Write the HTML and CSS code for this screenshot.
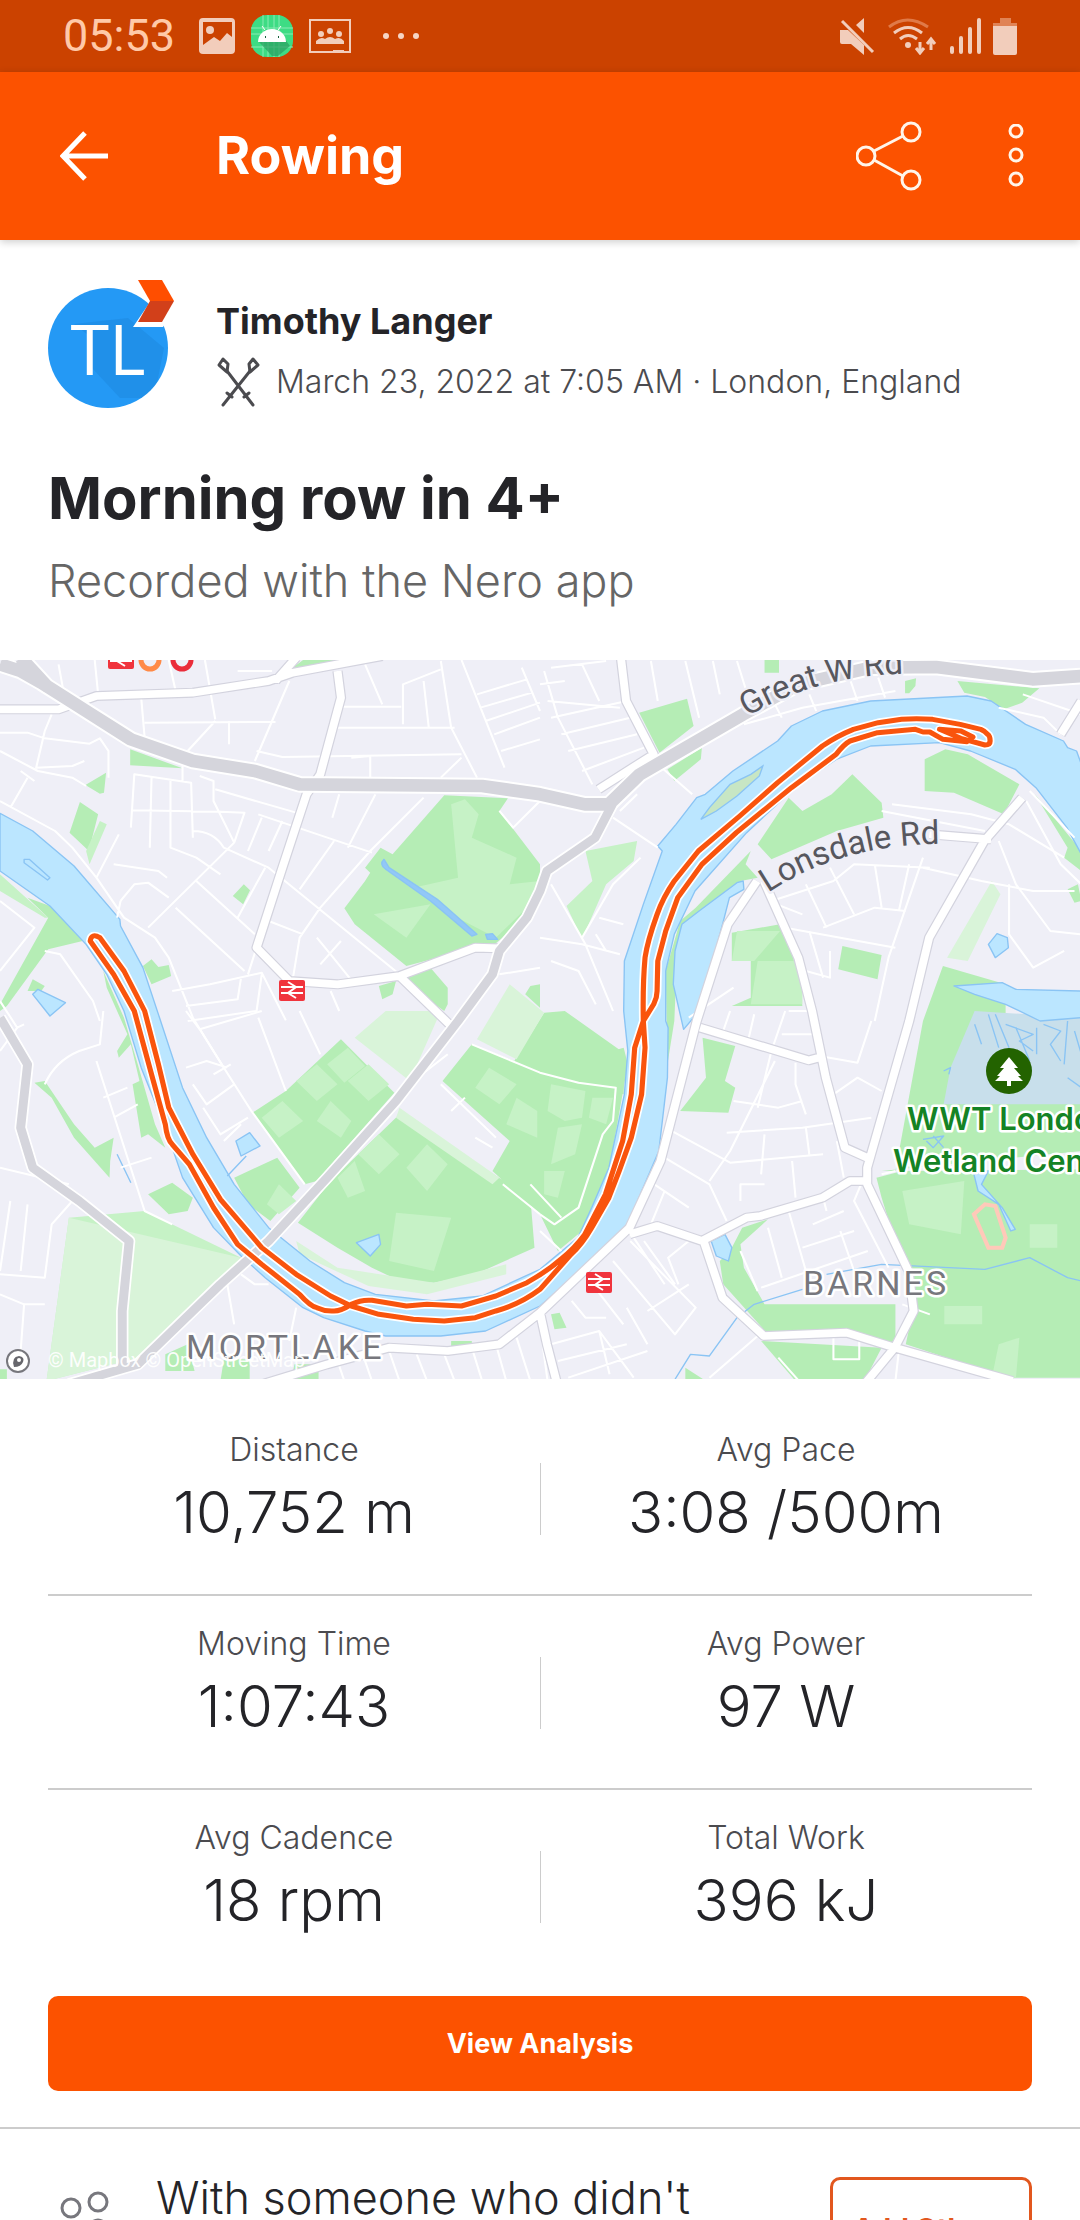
FILE: index.html
```html
<!DOCTYPE html>
<html lang="en">
<head>
<meta charset="utf-8">
<meta name="viewport" content="width=device-width, initial-scale=1">
<title>Rowing</title>
<link rel="stylesheet" href="styles.css">
</head>
<body>
<div class="statusbar">
  <div class="status-left">
    <span class="clock">05:53</span>
    <svg width="36" height="36" viewBox="0 0 36 36" fill="#f2cdbb"><path fill-rule="evenodd" d="M4 0h28a4 4 0 0 1 4 4v28a4 4 0 0 1-4 4H4a4 4 0 0 1-4-4V4a4 4 0 0 1 4-4zM4 4v23l11-8 6 4 7-8 5 4V4z"/><circle cx="11" cy="12" r="4"/></svg>
    <svg width="42" height="42" viewBox="0 0 42 42"><rect width="42" height="42" rx="16" fill="#3ddc84"/><path d="M12 0v42M17 0v42M23 0v42M28 0v42M0 13h42M0 19h42M0 32h42" stroke="#8aebb5"/><path d="M8 27l13 14h6l12-10-6-8z" fill="#2a9d60" opacity=".7"/><path d="M7 27a14 13 0 0 1 28 0z" fill="#fff"/><path d="M14 15l-3-4M27 15l3-4" stroke="#fff"/><path d="M14 22h1M27 22h1" stroke="#17603a" stroke-width="2"/></svg>
    <svg class="group-icon" width="42" height="34" viewBox="0 0 42 34" fill="#f2cdbb"><path d="M1 1h40v32H1z" fill="none" stroke="#f2cdbb" stroke-width="2"/><circle cx="21" cy="12" r="3"/><circle cx="12" cy="15" r="3"/><circle cx="30" cy="15" r="3"/><path d="M7 25v-3q5-5 9-2 5-4 10 0 5-3 9 2v3zM24 31h11v2H24z"/></svg>
    <svg class="dots-icon" width="36" height="8" viewBox="0 0 36 8" fill="#f6d5c5"><circle cx="3" cy="4" r="3"/><circle cx="18" cy="4" r="3"/><circle cx="33" cy="4" r="3"/></svg>
  </div>
  <div class="status-right">
    <svg width="36" height="38" viewBox="0 0 36 38" fill="#f2cdbb"><path d="M1 13h8l16 15v10L12 27H3q-2 0-2-2zM25 1v15l-8-8z"/><path d="M3 4l31 31" stroke="#f2cdbb" stroke-width="3"/></svg>
    <svg width="50" height="38" viewBox="0 0 50 38" fill="none" stroke="#f2cdbb" stroke-width="3"><path d="M2 10q18-14 39 0" stroke="#e07a48"/><path d="M7 16q14-11 28 0M13 22q8-7 17 0"/><path d="M33 25v10M29 31l4 5 4-5M44 33V23M40 27l4-5 4 5"/><circle cx="21" cy="28" r="3" fill="#f2cdbb" stroke="none"/></svg>
    <svg width="32" height="36" viewBox="0 0 32 36" stroke="#f2cdbb" stroke-width="4" stroke-linecap="round"><path d="M3 30v4M12 20v14M21 11v23M30 2v32"/></svg>
    <svg class="battery-icon" width="24" height="38" viewBox="0 0 24 38"><path d="M7 1h11v5h6v5H0V6h7z" fill="#e08355"/><path d="M0 9h24v27q0 2-2 2H2q-2 0-2-2z" fill="#f2cdbb"/></svg>
  </div>
</div>
<header class="appbar">
  <button class="icon-button" aria-label="Back"><svg width="50" height="50" viewBox="0 0 50 50" fill="none" stroke="#fff" stroke-width="5"><path d="M48 25H4M25 2L3 25l22 23"/></svg></button>
  <h1 class="appbar-title">Rowing</h1>
  <button class="icon-button" aria-label="Share"><svg width="68" height="72" viewBox="0 0 68 72" fill="none" stroke="#fff5ea" stroke-width="3"><circle cx="10" cy="36" r="9"/><circle cx="55" cy="12" r="9"/><circle cx="55" cy="60" r="9"/><path d="M18 31l29-15M18 40l29 16"/></svg></button>
  <button class="icon-button more" aria-label="More options"><svg width="16" height="64" viewBox="0 0 16 64" fill="none" stroke="#fff5ea" stroke-width="3"><circle cx="8" cy="7" r="6"/><circle cx="8" cy="31" r="6"/><circle cx="8" cy="55" r="6"/></svg></button>
</header>
<main>
  <section class="athlete">
    <div class="avatar">
      <svg width="128" height="130" viewBox="0 0 128 130"><defs><clipPath id="face"><circle cx="60" cy="70" r="60"/></clipPath></defs><circle cx="60" cy="70" r="60" fill="#2499f5"/><path clip-path="url(#face)" d="M26 46l18 14v30l28 30h34l10-50-36-30z" fill="#1c82d6" opacity=".4"/><text class="initials" x="60" y="97" text-anchor="middle">TL</text><path d="M86-1l16 25-17 25h30l16-25-16-25z" fill="#fff"/><path d="M90 2h24l12 21h-24z" fill="#ff4e00"/><path d="M102 23h24l-12 21H90z" fill="#d2401a"/></svg>
    </div>
    <div class="who">
      <h2 class="name">Timothy Langer</h2>
      <p class="meta"><svg width="44" height="50" viewBox="0 0 44 50" fill="none" stroke="#4b4b4f" stroke-width="3" stroke-linecap="round" stroke-linejoin="round"><path d="M7 48L34 14M37 48L11 14M11 36l5 4M33 36l-5 4"/><path d="M11 15L3 8l4-6 5 5zM34 15l8-7-5-6-4 5z"/></svg><span>March 23, 2022 at 7:05 AM · London, England</span></p>
    </div>
  </section>
  <section class="summary">
    <h2 class="title">Morning row in 4+</h2>
    <p class="desc">Recorded with the Nero app</p>
  </section>
  <svg class="map" viewBox="0 659 1080 719" role="img" aria-label="Route map">
    <defs>
      <path id="banks" d="M0 487L95 540 215 645 348 805 350 825 415 950 460 1090 530 1310 600 1460 680 1600 780 1730 900 1830 1000 1895 1090 1930 1260 1950 1400 1935 1568 1855 1678 1760 1718 1670 1768 1550 1813 1330 1823 1200 1811 1080 1813 930 1868 760 1923 600 1910 585 1963 520 2023 440 2048 430 2128 360 2258 270 2298 225 2388 180 2528 150 2808 135 2878 150 2978 220 3088 270 3100 290 3126 300 3140 340V610L3098 530 3008 410 2948 355 2818 300 2728 275 2528 285 2428 325 2308 410 2168 545 2018 720 1958 850 1933 960 1933 1110 1940 1130 1938 1280 1913 1500 1818 1730 1738 1810 1618 1920 1568 1965 1410 2040 1280 2055 1120 2055 1060 2040 940 2000 880 1970 770 1880 700 1815 620 1730 530 1580 480 1430 410 1250 360 1080 310 970 250 880 145 765 0 660z"/>
      <path id="local" d="M0 175H170L280 135 560 125 780 90 850 65 1110 15M800 90L860 20M980 60L990 140 930 370 890 430 820 650 745 890 840 990 980 1000 1160 975 1380 890 1450 892M1160 975L1310 1125M1803 20L1818 150 1898 310 1738 415M2968 440L2858 570 2698 860 2640 1110 2518 1550 2518 1600 2638 1860 2653 1980 2598 2090 2510 2200M2198 690L2113 820 2023 1110 1918 1530 1828 1730 1568 1985 1450 2080 1300 2100 1130 2090 950 2140 760 2200M2218 690L2318 920 2358 1080 2398 1280 2453 1490 2518 1520M2033 1130L2348 1228 2378 1220M1828 1750L1908 1725 2038 1770 2168 1700 2208 1695 2388 1640 2468 1590 2518 1590M2043 1770L2098 1940 2218 2055 2458 2045 2598 2090 2940 2190M1568 1985L1588 2080 1618 2200M3080 250L3140 150M2698 550L2878 565"/>
      <path id="trunk" d="M1778 460L1728 560 1588 660 1568 720 1530 800 1450 900 1430 970 1330 1110 1150 1350 950 1580 780 1770 640 1900 400 2140 200 2200M0 1100L80 1240 60 1430 95 1550 230 1650 375 1770 355 1980V2150"/>
      <path id="trunk-wide" d="M0 40L60 60 120 95 250 180 380 265 560 330 740 360 870 400 1400 405 1568 430 1698 460 1768 460 1858 370 2158 190 2318 100 2528 50 2718 48 2998 85 3140 75M60 20L140 110"/>
      <path id="track" d="M262 870L330 970 390 1080 440 1270 480 1420Q485 1465 500 1480L550 1540 620 1670 690 1780 760 1840 870 1930Q900 1965 920 1970 945 1982 970 1980 990 1980 1020 1960 1050 1945 1080 1948L1180 1965 1240 1960 1340 1965 1440 1935 1530 1895Q1590 1860 1628 1825 1670 1790 1698 1750L1758 1630 1808 1470 1833 1330 1843 1190 1868 1110 1898 1060Q1908 1040 1908 1020L1910 930 1933 840 1968 740 2038 640 2138 545 2298 410 2428 310Q2450 280 2468 270L2548 245 2658 235 2680 243H2700L2738 265 2808 272 2825 258 2790 240 2728 235 2790 262 2860 282Q2875 282 2875 270 2875 255 2868 250 2860 240 2848 235L2788 220 2708 205Q2660 202 2618 205L2550 215 2478 235Q2430 255 2388 285L2258 395 2148 495 2028 600 1958 690Q1925 740 1908 790 1880 870 1873 920 1866 1000 1868 1110L1873 1190 1863 1330 1833 1460 1798 1560 1768 1640 1718 1730Q1690 1780 1658 1810L1568 1915Q1510 1960 1440 1980L1380 2000 1290 2010 1200 2005 1100 1990 1020 1965 960 1935 860 1870 760 1790 640 1645 560 1510 490 1370 460 1240 420 1080 360 960 290 860Q265 845 262 870z"/>
      <path id="great-w-arc" d="M747 716Q815 675 900 673H1000"/>
      <path id="lonsdale-arc" d="M768 892Q840 844 936 843H1030"/>
      <g id="rail"><rect x="-13" y="-10" width="26" height="21" rx="2" fill="#f0343d"/><path d="M-11 3H11M-11-3H11M-4-8L4-3-4 3 4 8" fill="none" stroke="#fff" stroke-width="2"/></g>
    </defs>
    <rect y="659" width="1080" height="720" fill="#efeff7"/>
    <g transform="translate(0 650) scale(.34439 .33333)">
      <g fill="#b5edb5">
        <path d="M378 295L530 352 378 343zM248 402L308 365 302 425 290 428zM232 453L285 490 258 600 202 545zM676 735L708 700 726 718 706 760zM415 945L440 925 460 948 490 942 497 975 440 1000zM850 50L880 27H985L900 45zM1290 433L1475 442 1450 480 1568 640V720L1530 800 1430 885 1380 890 1180 945 1030 820 1000 772 1060 690 1075 665 1060 650 1105 590 1140 610zM1180 965L1250 950 1300 1010 1300 1060 1290 1080 1180 1000zM1100 1005L1150 990 1140 1030 1110 1045zM1568 1000L1540 1005 1525 1030 1568 1070zM80 740L145 765 240 870 140 895 20 1065 0 1080V1060L140 800zM80 1020L95 985 130 1005 120 1020zM300 960L360 1100 400 1240 450 1420 480 1490 430 1450 410 1460 385 1300 405 1290 380 1180 345 1220 340 1200 370 1150 310 1010z"/>
        <path d="M100 1295L130 1290 215 1420 275 1490 330 1460 320 1530 318 1580 215 1460 150 1340zM430 1630L500 1595 560 1640 545 1680 490 1690zM990 1165L1145 1325 920 1590 885 1600 733 1385 830 1320zM680 1580L805 1520 870 1610 785 1710 720 1660zM1160 1390L1540 1640 1552 1790 1380 1870 1260 1895 1160 1890 1080 1850 980 1790 865 1715 960 1590zM1370 1180L1568 1260 1811 1190 1823 1240 1770 1550 1690 1740 1620 1800 1568 1690 1430 1560 1480 1470 1285 1290z"/>
        <path d="M1490 1235L1580 1085 1640 1080 1811 1205V1330L1568 1290zM480 2110L545 2080 565 2160H480zM650 2125H725V2190H640zM855 2140H925V2190H845zM1310 2070H1370V2085H1310zM0 2155H20V2190H0z"/>
        <path d="M2220 27H2262V65H2220zM1856 185L1995 143 2014 225 1915 305zM1938 355L2038 290 2035 325 1958 390zM2628 90L2660 82 2658 105 2640 127H2628zM2780 90L3018 112 2968 155 2915 175 2860 138 2800 125zM2685 325L2745 295 2810 310 2960 400 2915 490 2770 425 2685 420zM2290 440L2330 480 2415 430 2475 370 2560 455 2565 500 2430 540 2240 625 2200 580zM1975 810L2020 770 2180 600 2165 640 2200 680 2150 690 2110 735 2010 800 1968 870 1958 1110 1938 1240 1933 960zM2125 845L2265 820 2300 900 2330 1065 2125 1065 2180 1040V930H2125zM2446 885L2560 912 2548 985 2434 955zM3005 430L3140 600V660L3090 620 3100 590zM3100 715L3130 700 3140 750 3120 755zM2738 945L2920 1000V1110L3140 1090V1500L2560 1560 2600 1560 2680 1110z"/>
        <path d="M2545 1580L2620 1560 3140 1555V2180H2925L2630 2080 2655 1960 2560 1640zM2040 1160L2135 1185 2105 1290 2135 1310 2115 1385 1975 1380 2050 1280zM2155 1730L2230 1705 2150 1780 2160 1850 2220 1960 2600 1960 2600 2080 2450 2045 2230 2050 2100 1900 2090 1830 2120 1800zM2210 2070L2560 2090 2510 2190H2310zM1600 1990L1625 1985 1645 2030 1610 2035zM1990 2150L2050 2190H1990z"/>
      </g>
      <g fill="#c6f2c6">
        <path d="M1350 445L1390 490 1370 560 1500 620 1480 700 1568 690 1520 780 1440 860 1290 780 1200 710 1330 680 1310 460zM1085 790L1250 760 1180 860zM0 670L140 800 130 800 0 720zM250 600L290 510 310 520 260 640z"/>
        <path d="M1130 1080H1280L1180 1240 1100 1170zM860 1290l60-50 60 60-60 50zM950 1240l60-50 50 55-60 50zM1010 1290l60-50 60 60-60 50zM760 1400l60-50 60 60-70 50zM960 1350l60 60-30 50-70-50zM1150 1685L1310 1700 1260 1860 1130 1830zM1040 1510l60-60 60 60-60 60zM1180 1550l60-70 60 60-60 80zM980 1580l50-50 30 90-50 20zM810 1600l50 50-50 40-35-30zM1420 1250l80 50-50 60-70-50zM1500 1340l60 40v80l-90-40zM2200 930h130v130H2180zM2140 840H2265L2190 930H2125zM200 1700L420 1680 700 1820 400 2120 135 2190z"/>
        <path d="M1600 1300L1700 1320 1690 1400 1640 1410 1590 1380zM1620 1430L1690 1420 1670 1510 1600 1540zM1580 1560L1640 1560 1620 1640 1580 1630zM1720 1340L1780 1340 1760 1420 1710 1400zM2620 1620L2800 1590 2790 1750 2640 1720zM2990 1720h80v70h-80zM2742 1965h110v55H2742zM2900 2080l60-20-10 120h-70zM1700 600L1850 570 1840 630 1760 700 1690 865 1645 765 1720 690z"/>
      </g>
      <path d="M200 1700L700 1820 400 2120 135 2190zM860 1770L980 1850 1260 1895 1470 1840V1870L1240 1930 1070 1905 870 1810zM1160 1370L1450 1580 1430 1600 1150 1400zM1030 1160L1120 1080H1280L1190 1290zM1385 1165L1480 1000 1580 1085 1500 1225zM2880 690L2905 730 2810 930 2750 920z" fill="#d9f4d9"/>
      <path d="M2760 1250L2830 1080 3140 1100V1360H2740z" fill="#c8dfeb"/>
      <g fill="#bbe6ff" stroke="#8ac4f4" stroke-width="4" stroke-linejoin="round">
        <use href="#banks"/>
        <path d="M2140 695L2158 690 2160 715 2118 740 2098 820 2030 1080 1985 1135 1955 1000 1960 900 1980 820 2030 780zM95 1030L110 1015 190 1055 145 1095zM685 1470L725 1445 755 1485 700 1515zM1035 1775L1100 1750 1105 1780 1075 1815zM2065 1770L2105 1750 2125 1790 2115 1830 2080 1815zM2870 880L2895 848 2925 860 2928 890 2890 920zM2770 1005L2910 995 2950 1015 3140 1020V1100L3020 1110 2920 1060 2830 1030zM2828 1570L2870 1560 2850 1600 2910 1670 2948 1735 2935 1740 2900 1660 2840 1620zM70 625L85 625 145 680 138 687 70 635z"/>
        <path d="M1115 625Q1100 640 1120 655L1250 750 1370 855 1385 850 1270 745 1130 650zM1410 850L1430 848 1445 865 1415 865z" fill="#92c8f8"/>
        <path fill="none" d="M340 1510L380 1595M660 1575L715 1515M1960 2185L2005 2110 2060 2115 2140 2000 2190 1960 2330 1915M2400 1870L2560 1840 2860 1855 2990 1820 3100 1880 3140 1890M2830 1120L2850 1180M2870 1090L2900 1190M2890 1090L2930 1190M2920 1120L3000 1150 2960 1170 3000 1200M2950 1130L2990 1230M3010 1130V1210M3030 1120L3080 1140 3050 1180 3080 1230M3100 1110L3090 1240M3120 1140L3140 1210M3100 1280L3140 1310M2740 1260L2760 1250 2755 1270M2680 1465L2740 1455 2710 1490 2690 1470M2710 1455L2740 1490"/>
      </g>
      <path d="M2035 505L2060 470 2120 400 2180 370 2215 345 2205 375 2140 435 2080 480z" fill="#c7e6c4" stroke="#8ac4f4" stroke-width="4"/>
      <g fill="none" stroke="#fff" stroke-width="6" stroke-linejoin="round">
        <path d="M170 40L185 125M275 27L285 130M490 27L510 120M595 27L625 205M690 60H790M840 90L740 330M410 140L420 260M420 215L800 213M665 210V280M625 210L545 300M745 300L820 318 1340 310M970 230H1320M995 167H1165M1060 40L1110 160M1280 30L1310 230 1385 380M1170 220V100L1280 55M1340 27L1465 350M1385 130L1530 85M1395 170L1545 125M1410 210L1568 155M1435 250L1568 200M1455 300L1568 265M1515 50L1568 180M1230 90L1245 230M0 245H80L130 262 260 278 290 262 315 300V380M150 190L130 240 105 350 210 345 245 330M0 300L110 360 210 380 250 405M0 450L160 540 210 590 280 680 360 800 450 860 490 920 560 1100 650 1250 730 1380 885 1600M380 530L390 370 555 395 560 560M440 380L435 590M495 390V590L570 620 640 670M530 345V390M385 478L640 482 710 485 685 560 680 575M680 575L620 450 620 390 580 375M625 415L860 485M750 490L1080 605M720 600L760 500M780 600L820 510M560 540Q620 540 650 590L780 650 1160 970M680 575L430 830M570 690L740 850M510 770L710 960M690 800L770 650M1230 440L1075 600 930 770 870 860 850 985M985 430L965 500M1090 430L1010 590M970 570L870 715M1020 320L1075 315V390M1280 380L1340 320M330 640L460 660 485 680M280 680L345 550M350 750L390 700 430 695 490 740M350 750L340 800M780 810L880 850M745 890L720 970M500 1020L610 1000 760 965 830 1108M540 1065L690 1045 700 980M545 1110L745 1080 760 970M1568 950L1450 970M1450 480L1490 530 1568 450M920 860L960 910 1030 1000M930 940L990 870M960 1020L985 1080M0 1050L50 1130 70 1120M0 750L100 830 0 960M30 470L80 380M60 360L100 390M130 900L175 910 270 1050 290 1110"/>
        <path d="M540 1080L580 1135 760 1080M580 1135L650 1250M750 1100L830 1320M870 1080L930 1210M540 1250L600 1230 660 1250M560 1300L600 1360 680 1300M590 1370L640 1450 720 1400M650 1470L700 1420M620 1270L670 1240M130 1300Q160 1230 230 1200L290 1180 300 1080M280 1230L420 1680 500 1720M300 1340L370 1310M330 1400L400 1360M350 1550L440 1520M0 1200L50 1130M0 1550L200 1600M0 1870L130 1880 150 1720 210 1650M80 1660L60 1860M30 1650L0 1860M0 1930L70 1960 130 1960M70 1960L60 2100M700 1870L740 1900 780 1900M660 1900L680 2020M860 1970L840 2070M1280 1300L1440 1460M1200 1290L1300 1210M1310 1380L1350 1340M1380 1460L1430 1490M1460 1600L1568 1690M970 2100L1000 2190M1050 2100L1080 2190M1130 2100L1160 2190M1210 2110L1240 2190M1290 2110L1320 2190M1370 2090L1400 2190M1440 2080L1470 2190M1500 2060L1540 2190M1568 2020L1590 2190"/>
        <path d="M1580 60L1620 200 1720 400M1568 100L1640 90M1600 50L1760 30M1590 150L1800 170M1600 200L1820 150M1630 250L1830 200M1650 300L1850 250M1690 360L1870 290M1690 40L1740 150M1890 30L1910 150M1990 30L2030 200M2070 30L2090 130M2140 30L2170 130M2240 140L2270 200M2160 220L2330 170 2600 120M2470 90L2490 150M2550 80L2570 140M1780 500L1910 590M1800 480L1850 430M1910 340L2010 430M2350 130L2370 180M2900 170L3030 200 3080 250M2970 130L3140 190M2990 420L3120 560M2980 450L3080 640 3140 700M2590 460L2820 490 2930 520 3090 620M2560 480L2860 540M2240 750L2420 690 2480 640 2700 650M2340 700L2400 830M2410 650L2480 790M2540 640L2560 770M2640 640L2610 780M2390 830L2540 770 2630 780M2230 750L2330 790M2280 830L2600 890M2350 840L2390 980M2410 900V980L2340 960M2680 620L2580 920 2540 1110M2680 650L2850 690 3000 720 3120 720M2900 570L2950 700 3050 840 3140 850M2930 700V850L3000 950 3090 900M1568 860L1690 880 1800 910M1600 700L1700 880 1780 1080M1690 860L1780 700 1860 620M1740 800L1810 820M1730 850L1760 900M1600 930L1680 960 1730 1060M2000 1100L2130 1010"/>
        <path d="M2120 1080L2100 1140M2190 1090L2170 1180M2280 1080L2240 1200 2200 1370M2250 1230L2120 1500 2060 1590M2310 1235V1300L2340 1390M2370 1080H2290M2360 1150H2270M2380 1215L2490 1235 2530 1110M2420 1330L2490 1280 2560 1320M1950 1440L2120 1535 2390 1510M2110 1445L2330 1430 2530 1400M2130 1350L2260 1370 2330 1350M2220 1450L2210 1570M2340 1430L2350 1510M2300 1530L2310 1640M1930 1520L2060 1600 2110 1710M1900 1600L2000 1670M1890 1720L1930 1620M2430 1470L2450 1580M2220 1600H2150V1650M2230 1730L2270 1880M2290 1680L2340 1860M2390 1640L2400 1680M2360 1720L2450 1680M2330 1790L2480 1740M2210 1910L2520 1800M2440 1740L2480 1860M2500 1600L2480 1650 2580 1850M2150 1800L2200 1920M1830 1770L2020 1970 1960 2050 1780 1830M1840 1760L1930 1900M1870 1770L1960 1900M2000 1770L1940 1820 1970 1900M2000 1900L1880 1980M1660 1950L1700 2000 1760 2000M1720 1900L1810 2020M1600 2080L1740 2040 1840 2180M1620 2130L1820 2080M1650 2180L1880 2100M1740 2040L1770 2170M1820 1970L1880 2080M2200 2055L2060 2180M2260 2120L2320 2190M2420 2050V2125H2495V2060M2610 2100L2600 2190"/>
        <path d="M1370 1180L1568 1265 1680 1295 1788 1310 1780 1410 1750 1450 1680 1670 1610 1720 1568 1690M1540 1600L1630 1700M1568 1740L1630 1800M2620 1960L2700 1990M2560 1570L2600 1560"/>
      </g>
      <path d="M2828 1690L2860 1660 2890 1665 2920 1760 2910 1790 2870 1790z" fill="none" stroke="#ffc9b9" stroke-width="12"/>
      <g fill="none" stroke-linejoin="round">
        <use href="#local" stroke="#d3d3de" stroke-width="30"/>
        <use href="#local" stroke="#fff" stroke-width="23"/>
        <use href="#trunk" stroke="#fff" stroke-width="36"/>
        <use href="#trunk-wide" stroke="#fff" stroke-width="50"/>
        <use href="#trunk" stroke="#d5d5dc" stroke-width="26"/>
        <use href="#trunk-wide" stroke="#d5d5dc" stroke-width="38"/>
        <use href="#track" stroke="#fff" stroke-width="25"/>
        <use href="#track" stroke="#f9540d" stroke-width="15"/>
      </g>
    </g>
    <use href="#rail" x="292" y="989"/>
    <use href="#rail" x="599" y="1281"/>
    <use href="#rail" x="121" y="657"/>
    <circle cx="150" cy="659" r="9" fill="none" stroke="#ff8a47" stroke-width="5"/>
    <circle cx="182" cy="659" r="9" fill="none" stroke="#ea2c3a" stroke-width="5"/>
    <circle cx="1009" cy="1070" r="23" fill="#236300"/>
    <path d="M1009 1056l9 11h-4l7 8h-3l5 5h-12v5h-4v-5h-12l5-5h-3l7-8h-4z" fill="#fff"/>
    <g class="road-label">
      <text><textPath href="#great-w-arc">Great W Rd</textPath></text>
      <text><textPath href="#lonsdale-arc">Lonsdale Rd</textPath></text>
    </g>
    <g class="park-label">
      <text x="907" y="1129">WWT London</text>
      <text x="893" y="1171">Wetland Centre</text>
    </g>
    <g class="place-label">
      <text x="803" y="1294">BARNES</text>
      <text x="186" y="1358">MORTLAKE</text>
    </g>
    <text class="credit" x="48" y="1366">© Mapbox © OpenStreetMap</text>
    <circle cx="18" cy="1360" r="11" fill="#fff" stroke="#77777d" stroke-width="2"/>
    <path d="M14 1366q-3-10 5-11 6 1 4 6-2 5-9 5z" fill="#66666c"/>
    <circle cx="19" cy="1359" r="2" fill="#fff"/>
  </svg>
  <dl class="stats">
    <div class="stat"><dt>Distance</dt><dd>10,752 m</dd></div>
    <div class="stat"><dt>Avg Pace</dt><dd>3:08 /500m</dd></div>
    <div class="stat"><dt>Moving Time</dt><dd>1:07:43</dd></div>
    <div class="stat"><dt>Avg Power</dt><dd>97 W</dd></div>
    <div class="stat"><dt>Avg Cadence</dt><dd>18 rpm</dd></div>
    <div class="stat"><dt>Total Work</dt><dd>396 kJ</dd></div>
  </dl>
  <div class="actions"><button class="primary">View Analysis</button></div>
  <section class="companions">
    <svg width="56" height="60" viewBox="0 0 56 60" fill="none" stroke="#77777d" stroke-width="3"><circle cx="11" cy="18" r="9"/><circle cx="38" cy="12" r="9"/><path d="M2 58V42q9-12 18 0v16M28 58V36q10-12 20 0v22"/></svg>
    <p>With someone who didn't record?</p>
    <button class="secondary">Add Others</button>
  </section>
</main>
</body>
</html>
```
FILE: styles.css
```css
* { box-sizing: border-box; margin: 0; }
body {
  display: flex;
  flex-direction: column;
  height: 100vh;
  overflow: hidden;
  background: #fff;
  color: #242428;
  font-family: Inter, "Liberation Sans", sans-serif;
}
svg { display: block; flex: none; }
button { font: inherit; cursor: pointer; }
main { flex: 1; min-height: 0; overflow: hidden; }

.statusbar {
  display: flex;
  flex: none;
  justify-content: space-between;
  align-items: center;
  height: 72px;
  padding: 0 63px;
  background: #cb4200;
}
.status-left, .status-right { display: flex; align-items: center; }
.status-left { gap: 16px; }
.status-right { gap: 12px; }
.clock { margin-right: 8px; font: 45px/72px Roboto, sans-serif; color: #ffc9a8; }
.dots-icon { margin-left: 16px; }

.appbar {
  display: flex;
  flex: none;
  align-items: center;
  height: 168px;
  padding: 0 56px 0 60px;
  background: #fc5200;
  color: #fff;
  box-shadow: 0 2px 8px #0003;
  z-index: 1;
}
.appbar-title { flex: 1; margin-left: 106px; font-size: 52px; line-height: 64px; font-weight: 700; }
.icon-button { padding: 0; border: 0; background: none; }
.more { margin-left: 84px; }

.athlete { display: flex; align-items: flex-start; padding: 38px 48px 0; }
.avatar { flex: none; width: 168px; }
.avatar svg { overflow: visible; }
.initials { font: 70px "Open Sans", sans-serif; fill: #fff; }
.who { padding-top: 20px; }
.name { font-size: 36px; line-height: 46px; font-weight: 700; }
.meta { display: flex; align-items: center; gap: 16px; margin-top: 12px; font-size: 32px; line-height: 52px; font-weight: 300; color: #4b4b4f; }
.summary { padding: 50px 48px 0; }
.title { font-size: 58px; line-height: 80px; font-weight: 700; }
.desc { margin-top: 16px; padding-bottom: 52px; font-size: 45px; line-height: 54px; font-weight: 300; color: #666; }

.map { width: 100%; height: auto; }
.road-label, .park-label, .place-label { stroke: #fff; stroke-width: 5px; stroke-linejoin: round; paint-order: stroke; }
.road-label { font: 33px Roboto, sans-serif; fill: #57575e; stroke: #efeff7; }
.park-label { font: 600 31px Inter, sans-serif; fill: #148325; }
.place-label { font: 34px Roboto, sans-serif; letter-spacing: 3px; fill: #77777d; }
.credit { font: 20px Roboto, sans-serif; fill: #fffffff0; }

.stats { display: grid; grid-template-columns: 1fr 1fr; padding: 23px 48px 0; }
.stat { position: relative; height: 194px; padding: 27px 0 0; text-align: center; border-bottom: 2px solid #ccc; }
.stat:nth-last-child(-n+2) { border-bottom: 0; }
.stat:nth-child(even)::before { content: ""; position: absolute; left: 0; top: 61px; width: 1px; height: 72px; background: #ccc; }
.stat dt { font-size: 32px; line-height: 42px; font-weight: 300; color: #4b4b4f; }
.stat dd { margin-top: 8px; font-size: 58px; line-height: 66px; font-weight: 300; }

.actions { padding: 12px 48px 36px; }
.primary { display: block; width: 100%; height: 95px; border: 0; border-radius: 10px; background: #fc5200; color: #fff; font-size: 27px; font-weight: 700; }

.companions { display: flex; align-items: flex-start; padding: 48px 48px 0 60px; border-top: 2px solid #ccc; }
.companions svg { margin-top: 13px; }
.companions p { flex: 1; margin-left: 40px; padding-right: 100px; font-size: 45px; line-height: 42px; font-weight: 300; }
.secondary { flex: none; width: 202px; height: 104px; border: 3px solid #e2571e; border-radius: 10px; background: #fff; color: #e2571e; font-size: 28px; font-weight: 700; white-space: nowrap; }
```
